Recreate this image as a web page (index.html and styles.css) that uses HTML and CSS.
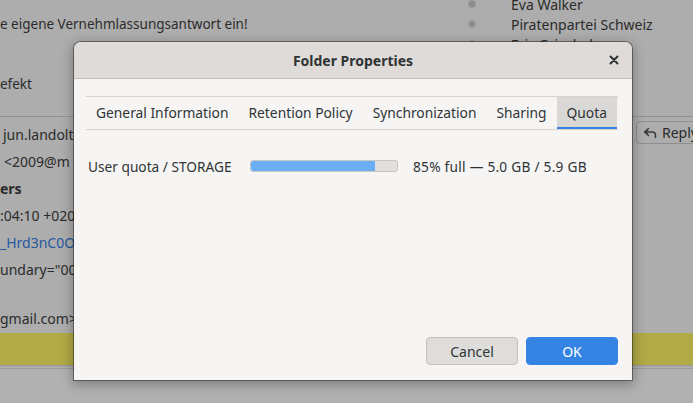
FILE: index.html
```html
<!DOCTYPE html>
<html lang="de">
<head>
<meta charset="utf-8">
<title>Folder Properties</title>
<link rel="stylesheet" href="styles.css">
</head>
<body>
<div class="app">
  <div class="top">
    <div class="subject">
      <div class="subj-line">e eigene Vernehmlassungsantwort ein!</div>
      <div class="subj-line second">efekt</div>
    </div>
    <ul class="recipients">
      <li><span class="dot"></span>Eva Walker</li>
      <li><span class="dot"></span>Piratenpartei Schweiz</li>
      <li><span class="dot"></span>Eric Grieshaber</li>
    </ul>
  </div>
  <div class="headers">
    <div class="hdr-lines">
      <div class="hl">jun.landolt</div>
      <div class="hl indent">&lt;2009@m</div>
      <div class="hl bold">ers</div>
      <div class="hl">:04:10 +020</div>
      <div class="hl link">_Hrd3nC0O</div>
      <div class="hl">undary="00</div>
      <div class="hl"></div>
      <div class="hl last">gmail.com&gt;</div>
    </div>
    <div class="reply">
      <svg class="reply-icon" width="14" height="12" viewBox="0 0 14 12"><path d="M5.5 1.5 L1.5 5 L5.5 8.5 M1.8 5 H9 C11 5 12.5 6.5 12.5 8.5 V10.5" fill="none" stroke="#3a3a3a" stroke-width="1.5" stroke-linejoin="round" stroke-linecap="round"/><path d="M5 3.2 L3.5 5 L5 6.8" fill="none" stroke="#3a3a3a" stroke-width="1"/></svg>
      <span>Reply</span>
    </div>
  </div>
  <div class="notice"></div>
  <div class="footer"></div>
</div>

<div class="dialog">
  <div class="titlebar">
    <span class="title">Folder Properties</span>
    <svg class="close" width="10" height="10" viewBox="0 0 10 10"><path d="M1.5 1.5 L8.5 8.5 M8.5 1.5 L1.5 8.5" stroke="#2e3436" stroke-width="2" stroke-linecap="round"/></svg>
  </div>
  <div class="content">
    <div class="tabs">
      <div class="tab">General Information</div>
      <div class="tab">Retention Policy</div>
      <div class="tab">Synchronization</div>
      <div class="tab">Sharing</div>
      <div class="tab active">Quota</div>
    </div>
    <div class="quota-row">
      <span class="quota-label">User quota / STORAGE</span>
      <div class="bar"><div class="fill" style="width:85%"></div></div>
      <span class="quota-text">85% full — 5.0 GB / 5.9 GB</span>
    </div>
    <div class="buttons">
      <button class="btn cancel">Cancel</button>
      <button class="btn ok">OK</button>
    </div>
  </div>
</div>
</body>
</html>
```
FILE: styles.css
```css
* { box-sizing: border-box; }
html, body { margin: 0; padding: 0; }
body {
  width: 693px;
  height: 403px;
  overflow: hidden;
  background: #adadad;
  font-family: "Noto Sans", "Open Sans", sans-serif;
  color: #2b2b2b;
  position: relative;
}
.app { display: flex; flex-direction: column; height: 403px; }

.top {
  display: flex;
  height: 117px;
  border-bottom: 1px solid #939393;
}
.subject { width: 467px; padding-top: 14px; font-size: 13.5px; }
.subj-line { line-height: 20px; white-space: nowrap; }
.subj-line.second { margin-top: 40px; }

.recipients {
  list-style: none;
  margin: -6px 0 0 0;
  padding: 0;
  font-size: 14px;
}
.recipients li {
  display: flex;
  align-items: center;
  height: 20px;
  white-space: nowrap;
}
.dot {
  width: 8px; height: 8px;
  border-radius: 50%;
  background: #8d8d8d;
  border: 1px solid #999;
  margin: 0 35px 0 1px;
}

.headers {
  display: flex;
  justify-content: space-between;
  padding-top: 4px;
  height: 216px;
}
.hdr-lines { font-size: 14px; width: 74px; }
.hl { line-height: 27px; height: 27px; white-space: nowrap; }
.hl:first-child { padding-left: 3px; }
.hl.indent { padding-left: 4px; }
.hl.bold { font-weight: bold; }
.hl.link { color: #2659a0; }
.hl.last { line-height: 18px; }
.reply {
  display: flex;
  align-items: center;
  gap: 5px;
  height: 23px;
  width: 70px;
  margin-right: -13px;
  padding-left: 6px;
  border: 1px solid #8e8e8e;
  border-radius: 4px;
  font-size: 14px;
  color: #2b2b2b;
}
.notice {
  height: 33px;
  background: #b2aa46;
  border-bottom: 1px solid #979797;
}
.footer {
  flex: 1;
  border-top: 1px solid #9a9a9a;
  margin-top: 2px;
  background: #b1b1b1;
}

.dialog {
  position: absolute;
  left: 74px;
  top: 42px;
  width: 558px;
  height: 338px;
  background: #f6f5f4;
  border-radius: 7px 7px 0 0;
  box-shadow: 0 0 0 1px rgba(0,0,0,0.38), 0 3px 12px 2px rgba(0,0,0,0.28);
  display: flex;
  flex-direction: column;
  color: #2e3436;
  font-size: 13.7px;
}
.titlebar {
  height: 37px;
  background: #dedbd8;
  border-bottom: 1px solid #c2bdb8;
  border-radius: 7px 7px 0 0;
  display: flex;
  align-items: center;
  justify-content: center;
  position: relative;
}
.title { font-weight: bold; font-size: 14px; padding-top: 1px; }
.close { position: absolute; right: 13px; top: 13px; }

.content {
  flex: 1;
  display: flex;
  flex-direction: column;
  padding: 17px 14px 15px 12px;
}
.tabs {
  display: flex;
  border-top: 1px solid #d6d2ce;
  border-bottom: 1px solid #d6d2ce;
  height: 34px;
  font-size: 13.8px;
}
.tab {
  padding: 0 10px;
  line-height: 31px;
  height: 32px;
  white-space: nowrap;
}
.tab.active {
  background: #d9d8d6;
  border-bottom: 2px solid #3584e4;
}
.quota-row {
  display: flex;
  align-items: center;
  height: 24px;
  margin-top: 24px;
  padding-left: 2px;
}
.quota-label { width: 162px; white-space: nowrap; }
.bar {
  width: 148px;
  height: 12px;
  background: #e1e0de;
  border: 1px solid #c8c5c2;
  border-radius: 3px;
  overflow: hidden;
}
.fill {
  height: 100%;
  background: #6aaff6;
  border-radius: 2px 0 0 2px;
}
.quota-text { margin-left: 15px; white-space: nowrap; letter-spacing: 0.25px; }

.buttons {
  margin-top: auto;
  display: flex;
  justify-content: flex-end;
  gap: 8px;
}
.btn {
  width: 92px;
  height: 28px;
  border-radius: 4px;
  font-family: inherit;
  font-size: 14px;
  padding: 0;
}
.btn.cancel {
  background: #dedddb;
  border: 1px solid #c3c0bd;
  color: #2e3436;
}
.btn.ok {
  background: #3584e4;
  border: 1px solid #3584e4;
  color: #ffffff;
}
```
